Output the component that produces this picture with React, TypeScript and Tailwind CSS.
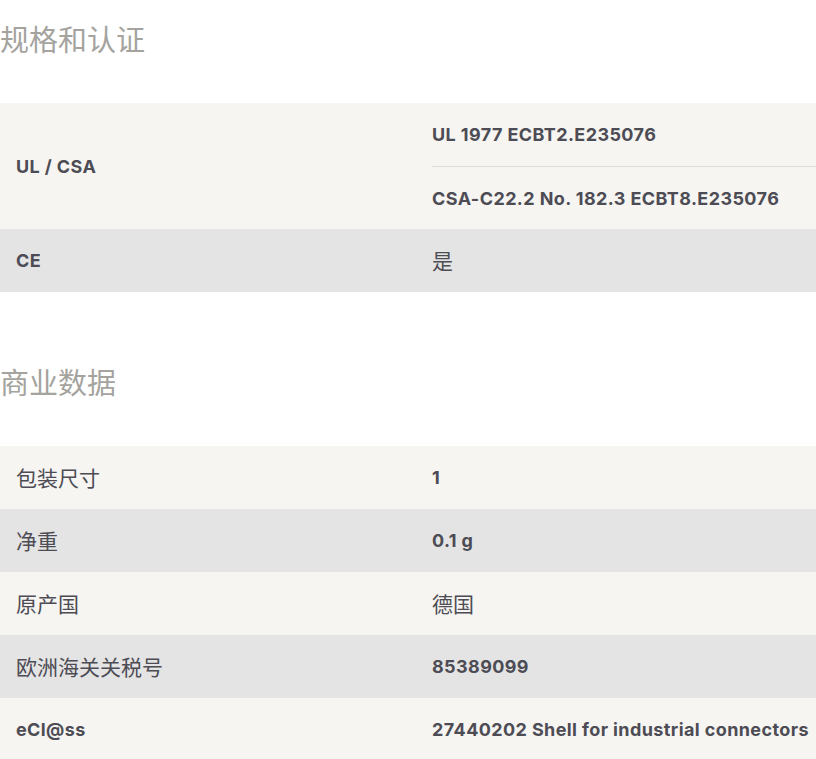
const latin = "font-['Inter','Noto_Sans_CJK_SC',sans-serif] font-bold text-[18px] tracking-[0.4px]";
const cjk = "font-['Noto_Sans_CJK_SC',sans-serif] font-normal text-[21px]";

type Row = { label: string; values: string[]; cjkLabel?: boolean; cjkValue?: boolean };

const certRows: Row[] = [
  { label: "UL / CSA", values: ["UL 1977 ECBT2.E235076", "CSA-C22.2 No. 182.3 ECBT8.E235076"] },
  { label: "CE", values: ["是"], cjkValue: true },
];

const tradeRows: Row[] = [
  { label: "包装尺寸", values: ["1"], cjkLabel: true },
  { label: "净重", values: ["0.1 g"], cjkLabel: true },
  { label: "原产国", values: ["德国"], cjkLabel: true, cjkValue: true },
  { label: "欧洲海关关税号", values: ["85389099"], cjkLabel: true },
  { label: "eCl@ss", values: ["27440202 Shell for industrial connectors"] },
];

function Section({ title, rows }: { title: string; rows: Row[] }) {
  return (
    <section>
      <h2 className="font-['Noto_Sans_CJK_SC',sans-serif] text-[29px] leading-[76px] text-[#a4a39e] font-normal">
        {title}
      </h2>
      <div className="mt-[27px]">
        {rows.map((row, i) => (
          <div
            key={row.label}
            className={`grid grid-cols-[416px_1fr] text-[#4d4c55] ${i % 2 === 0 ? "bg-[#f6f5f1]" : "bg-[#e4e4e4]"}`}
          >
            <div className={`flex items-center pl-4 ${row.cjkLabel ? cjk : latin}`}>{row.label}</div>
            <div className="pl-4">
              {row.values.map((v, j) => (
                <div
                  key={v}
                  className={`flex h-[63px] items-center ${j > 0 ? "border-t border-[#dcdbd7]" : ""} ${row.cjkValue ? cjk : latin}`}
                >
                  {v}
                </div>
              ))}
            </div>
          </div>
        ))}
      </div>
    </section>
  );
}

export default function App() {
  return (
    <div className="w-[816px] bg-white">
      <Section title="规格和认证" rows={certRows} />
      <div className="h-[51px]" />
      <Section title="商业数据" rows={tradeRows} />
    </div>
  );
}
